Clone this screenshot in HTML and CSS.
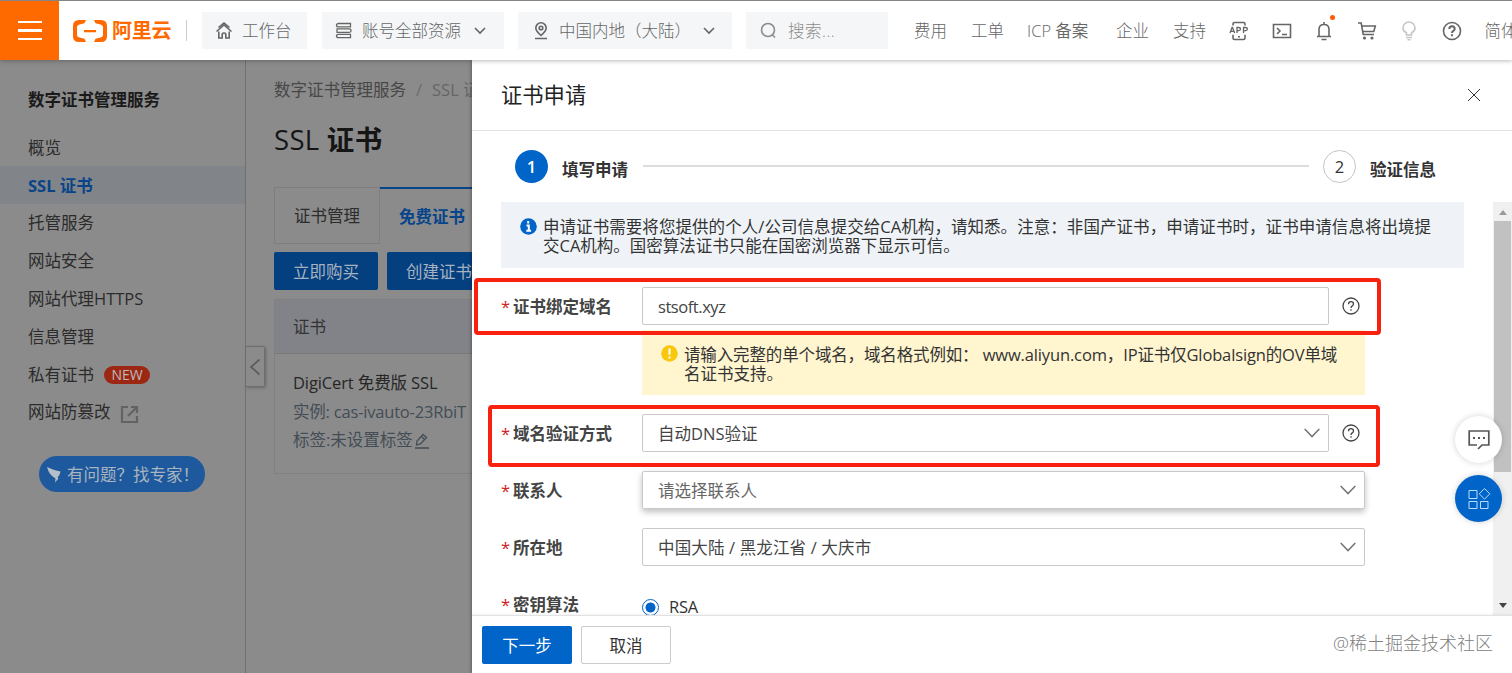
FILE: index.html
```html
<!DOCTYPE html>
<html lang="zh-CN">
<head>
<meta charset="utf-8">
<title>SSL 证书</title>
<link rel="stylesheet" href="styles.css">
</head>
<body>
<div class="app">
  <header class="top">
    <div class="menu"><i></i><i></i><i></i></div>
    <div class="logo">
      <svg width="36" height="24" viewBox="0 0 36 24"><path d="M14 1H7Q1 1 1 7v10q0 6 6 6h7l-1.500-3.200-5-1.300Q5 18 5 16V8q0-2 2.500-2.500l5-1.300ZM22 1h7q6 0 6 6v10q0 6-6 6h-7l1.500-3.200 5-1.300Q31 18 31 16V8q0-2-2.500-2.500l-5-1.300ZM12 11h12v2.200H12Z" fill="#ff6a00"/></svg>
      <b>阿里云</b>
    </div>
    <div class="divider"></div>
    <div class="pill work">
      <svg width="18" height="18" viewBox="0 0 18 18"><path d="M1.500 9.500 9 3l7.500 6.500M3.500 5.500 9 1l5.500 4.500M3.800 9.500V16h3.400v-3.500q0-1.500 1.800-1.500t1.800 1.500V16h3.400V9.500"/></svg><span>工作台</span>
    </div>
    <div class="pill account">
      <svg width="18" height="18" viewBox="0 0 18 18"><path d="M15.500 1.500h-12q-2 0-2 1.700t2 1.700h12ZM2 6.900h12q2 0 2 1.700t-2 1.700H2ZM15.500 12.300h-12q-2 0-2 1.700t2 1.700h12Z"/></svg><span>账号全部资源</span><svg class="end" width="12" height="12" viewBox="0 0 12 12"><path d="m1 3 5 5 5-5"/></svg>
    </div>
    <div class="pill region">
      <svg width="18" height="18" viewBox="0 0 18 18"><path d="M9 13.500C5 10 3.800 8.500 3.800 6a5.200 5.200 0 0 1 10.400 0c0 2.500-1.200 4-5.200 7.500ZM3 16.500h12"/><circle cx="9" cy="6" r="1.800"/></svg><span>中国内地（大陆）</span><svg class="end" width="12" height="12" viewBox="0 0 12 12"><path d="m1 3 5 5 5-5"/></svg>
    </div>
    <div class="pill search">
      <svg width="17" height="17" viewBox="0 0 17 17"><circle cx="8" cy="8" r="6.500"/><path d="m12.500 13 2.500 2.500"/></svg><span>搜索...</span>
    </div>
    <nav class="links"><a class="l1">费用</a><a class="l2">工单</a><a class="l3">ICP 备案</a><a class="l4">企业</a><a class="l5">支持</a></nav>
    <div class="icons">
      <svg width="20" height="20" viewBox="0 0 20 20"><path d="M4 4.500V3q0-1.500 1.500-1.500h9Q16 1.500 16 3v1.500M4 13.800V17q0 1.500 1.500 1.500h9Q16 18.500 16 17v-3.200M9 15.800h2"/><path class="fine" d="m1 12 2.100-5.500h.4L5.600 12M1.800 10.300h3.200M8 12V6.500h1.800q1.700 0 1.700 1.500T9.800 9.600H8M14.500 12V6.500h2q1.900 0 1.900 1.500t-1.900 1.600h-2"/></svg>
      <svg width="20" height="20" viewBox="0 0 20 20"><path d="M1.500 3.500h17v13h-17ZM5 7l3 3-3 3M10 13.500h5"/></svg>
      <span class="bell"><svg width="20" height="20" viewBox="0 0 20 20"><path d="M10 1v2M5 15V8.500q0-5 5-5t5 5V15M3 15.500h14M7.500 18.500h5"/></svg><i></i></span>
      <svg width="20" height="20" viewBox="0 0 20 20"><path d="M1 2h3.200l2 11.500H17M4.800 5h13.500l-1.500 5.500H6"/><circle cx="7.500" cy="17" r=".8"/><circle cx="15" cy="17" r=".8"/></svg>
      <svg class="pale" width="20" height="20" viewBox="0 0 20 20"><path d="M7.500 14v-2q-3.500-2-3.500-5a6 6 0 0 1 12 0q0 3-3.500 5v2ZM7 16.500h6M8.500 18.700h3"/></svg>
      <svg width="20" height="20" viewBox="0 0 20 20"><circle cx="10" cy="10" r="8.500"/><path d="M7.300 8q0-2.700 2.700-2.700T12.700 8q0 1.200-1.400 2-1.300.7-1.300 2M10 13.300v2" stroke-width="2"/></svg>
    </div>
    <span class="lang">简体</span>
  </header>

  <div class="body">
    <aside class="side">
      <h2>数字证书管理服务</h2>
      <ul>
        <li>概览</li>
        <li class="on">SSL 证书</li>
        <li>托管服务</li>
        <li>网站安全</li>
        <li>网站代理HTTPS</li>
        <li>信息管理</li>
        <li>私有证书<em>NEW</em></li>
        <li>网站防篡改<svg width="19" height="19" viewBox="0 0 19 19"><path d="M8 2H2v15h15v-6M11 2h6v6M17 2 8 11"/></svg></li>
      </ul>
      <div class="ask"><svg width="16" height="18" viewBox="0 0 16 18"><path d="M1 1q6 3 13.500 4.500Q14 9 11.500 11.500l1 1-3.500 4 .5-4Q3 9 1 1Z"/></svg>有问题？找专家！</div>
      <div class="fold"><svg width="12" height="18" viewBox="0 0 12 18"><path d="M10.500 1.500 2 9l8.500 7.500"/></svg></div>
    </aside>

    <main class="page">
      <div class="crumb">数字证书管理服务<i>/</i><span>SSL 证书</span></div>
      <h1><span>SSL</span> 证书</h1>
      <div class="tabs"><div class="tab">证书管理</div><div class="tab cur">免费证书</div></div>
      <div class="acts"><button>立即购买</button><button>创建证书</button></div>
      <div class="table">
        <div class="th">证书</div>
        <div class="td"><p class="name">DigiCert 免费版 SSL</p><p class="inst">实例: cas-ivauto-23RbiT</p><p>标签:未设置标签<svg width="16" height="16" viewBox="0 0 16 16"><path d="M1 15h14M2.500 12l.5-4 6-6.500 3.500 3L6.500 11ZM7.500 3.500l3 3"/></svg></p></div>
      </div>
    </main>

    <section class="drawer">
      <div class="dhead"><span>证书申请</span><svg width="14" height="14" viewBox="0 0 14 14"><path d="m1 1 12 12M13 1 1 13"/></svg></div>
      <div class="steps"><b class="num on">1</b><strong>填写申请</strong><hr><b class="num">2</b><strong>验证信息</strong></div>
      <div class="scroll">
        <div class="form">
          <div class="notice">
            <svg width="17" height="17" viewBox="0 0 17 17"><circle cx="8.500" cy="8.500" r="8.300" fill="#0064c8" stroke="none"/><path d="M6.500 7.500h2.300v5M6.300 12.700h4.800M8.200 3v2.400" stroke="#fff" stroke-width="2" fill="none"/></svg>
            <p><span class="n1">申请证书需要将您提供的个人/公司信息提交给CA机构，请知悉。注意：非国产证书，申请证书时，证书申请信息将出境提</span><br><span>交CA机构。国密算法证书只能在国密浏览器下显示可信。</span></p>
          </div>
          <div class="row r1"><label>证书绑定域名</label><div class="box short"><span class="dom">stsoft.xyz</span></div><svg class="q" width="18" height="18" viewBox="0 0 18 18"><circle cx="9" cy="9" r="8"/><path d="M6.500 7.200q0-2.500 2.500-2.500t2.500 2.300q0 1-1.300 1.900Q9 9.700 9 11M9 12.300v1.500"/></svg></div>
          <div class="hint">
            <svg width="17" height="17" viewBox="0 0 17 17"><circle cx="8.500" cy="8.500" r="8.300" fill="#f9c80e" stroke="none"/><path d="M8.500 3.500v6.300M8.500 11.500v2" stroke="#fff" stroke-width="2" fill="none"/></svg>
            <p><span class="w1">请输入完整的单个域名，域名格式例如： www.aliyun.com，IP证书仅Globalsign的OV单域</span><br><span>名证书支持。</span></p>
          </div>
          <div class="row r2"><label>域名验证方式</label><div class="box short">自动DNS验证<svg class="v" width="16" height="10" viewBox="0 0 16 10"><path d="m.7 1 7.300 7.500L15.300 1"/></svg></div><svg class="q" width="18" height="18" viewBox="0 0 18 18"><circle cx="9" cy="9" r="8"/><path d="M6.500 7.200q0-2.500 2.500-2.500t2.500 2.300q0 1-1.300 1.900Q9 9.700 9 11M9 12.300v1.500"/></svg></div>
          <div class="row r3"><label>联系人</label><div class="box lift">请选择联系人<svg class="v" width="16" height="10" viewBox="0 0 16 10"><path d="m.7 1 7.300 7.500L15.300 1"/></svg></div></div>
          <div class="row r4"><label>所在地</label><div class="box"><span class="place">中国大陆 / 黑龙江省 / 大庆市</span><svg class="v" width="16" height="10" viewBox="0 0 16 10"><path d="m.7 1 7.300 7.500L15.300 1"/></svg></div></div>
          <div class="row r5"><label>密钥算法</label><i class="radio"></i><span class="rsa">RSA</span></div>
        </div>
        <div class="bar"><i class="up"></i><div class="thumb"></div><i class="down"></i></div>
      </div>
      <footer><button class="next">下一步</button><button class="cancel">取消</button><span class="mark">@稀土掘金技术社区</span></footer>
    </section>
  </div>

  <div class="frame f1"></div>
  <div class="frame f2"></div>
  <div class="float chat"><svg width="22" height="22" viewBox="0 0 22 22"><path d="M9 16H1.200V2h19.600v14H14l-4 4" stroke-width="1.700"/><path d="M5 9h2M10 9h2M15 9h2" stroke-width="2"/></svg></div>
  <div class="float grid"><svg width="24" height="24" viewBox="0 0 24 24"><path d="M2 3.500h8v8H2ZM2 14.500h8v7H2ZM13.500 14.500h7.500v7h-7.500ZM17.500 1.500l5.300 5.300-5.300 5.300-5.300-5.300Z"/></svg></div>
</div>
</body>
</html>
```

FILE: styles.css
```css
* { box-sizing: border-box; }
body { margin: 0; font: 16.5px/22px "Open Sans", "Noto Sans CJK SC", sans-serif; color: #333; }
p, h1, h2, ul { margin: 0; padding: 0; }
ul { list-style: none; }
svg { fill: none; stroke: currentColor; flex: none; }
button { font: inherit; padding: 0; }
.app { position: relative; width: 1512px; height: 673px; overflow: hidden; display: flex; flex-direction: column; white-space: nowrap; }

.top { position: relative; z-index: 3; height: 60px; flex: none; display: flex; align-items: center; background: #fff; border-top: 1px solid #858585; box-shadow: 0 1px 4px rgba(0,0,0,.28); color: #666; }
.top svg { stroke-width: 1.6; }
.menu { width: 59px; height: 59px; flex: none; background: #ff6a00; display: flex; flex-direction: column; align-items: center; justify-content: center; gap: 6px; }
.menu i { width: 24px; height: 2.500px; background: #fff; }
.logo { width: 114px; flex: none; margin-left: 13px; display: flex; align-items: center; gap: 4px; color: #ff6a00; }
.logo svg { stroke: none; }
.logo b { font-size: 20px; letter-spacing: -.3px; }
.divider { width: 1px; height: 21px; background: #ccc; margin-right: 15px; flex: none; }
.pill { height: 37px; flex: none; display: flex; align-items: center; background: #f5f6f7; font-weight: 300; }
.pill span { padding-top: 1px; }
.pill .end { margin-left: auto; }
.work { width: 105px; padding-left: 13px; margin-right: 15px; }
.work span { margin-left: 9px; }
.account { width: 182px; padding: 0 18px 0 13px; margin-right: 14px; }
.account svg:first-child { stroke-width: 1.3; }
.account span { margin-left: 9px; }
.region { width: 214px; padding: 0 17px 0 14px; margin-right: 14px; }
.region span { margin-left: 9px; }
.search { width: 142px; padding-left: 14px; color: #8c8c8c; }
.search span { margin-left: 11px; letter-spacing: .5px; }
.links { display: flex; flex: none; margin-left: 26px; font-weight: 300; padding-top: 1px; }
.l1 { width: 57px; } .l2 { width: 56px; } .l3 { width: 89px; } .l4 { width: 57px; } .l5 { width: 56px; }
.l3 { font-weight: 350; }
.icons { display: flex; flex: none; gap: 22.500px; }
.icons .fine { stroke-width: 1.300; }
.icons .pale { color: #c6c6c6; }
.bell { position: relative; display: flex; }
.bell i { position: absolute; right: -1px; top: -6px; width: 5px; height: 5px; border-radius: 50%; background: #ff5a00; }
.lang { margin-left: 23px; font-weight: 300; padding-top: 1px; }

.body { flex: 1; display: flex; min-height: 0; background: #8b8b8b; }
.side { position: relative; width: 246px; flex: none; border-right: 1px solid #707070; color: #2b2b2b; }
.side h2 { margin: 29px 0 17px 28px; font-size: 16.500px; line-height: 22px; color: #1a1a1a; }
.side li { height: 37.800px; padding: 2px 0 0 28px; display: flex; align-items: center; }
.side .on { background: #818489; color: #094488; font-weight: 700; }
.side em { margin-left: 10px; width: 46px; height: 18px; border-radius: 9px; background: #9c2713; color: #bbb; font: 14px/18px "Open Sans", sans-serif; text-align: center; }
.side li svg { margin: 4px 0 0 9px; color: #636363; stroke-width: 2.200; }
.ask { margin: 26px 0 0 39px; width: 166px; height: 36px; border-radius: 18px; background: #1d599c; color: #a9b4c0; display: flex; align-items: center; padding: 2px 0 0 7px; gap: 5px; }
.ask svg { fill: #b4bfca; stroke: none; }
.fold { position: absolute; left: 246px; top: 286px; width: 19px; height: 41px; border: 1px solid #6d6d6d; border-left: 0; border-radius: 0 2px 2px 0; box-shadow: 1px 1px 3px rgba(0,0,0,.25); display: flex; align-items: center; justify-content: center; color: #5c5c5c; }
.fold svg { stroke-width: 1.700; }

.page { width: 226px; flex: none; padding: 19px 0 0 28px; overflow: hidden; }
.crumb { color: #474747; }
.crumb i { margin: 0 10px; color: #6c6c6c; font-style: normal; }
.crumb span { color: #666; }
.page h1 { margin-top: 21px; font-size: 27.500px; line-height: 36px; letter-spacing: .3px; color: #151515; }
.page h1 span { font-weight: 500; }
.tabs { display: flex; margin-top: 29px; }
.tab { width: 106px; height: 57px; flex: none; display: flex; align-items: center; justify-content: center; border: 1px solid #7e7e7e; color: #2c2c2c; padding-top: 1px; }
.tab.cur { width: 104px; border: 0; border-top: 2px solid #07448a; color: #07448a; font-weight: 700; }
.acts { display: flex; gap: 9px; margin-top: 8px; }
.acts button { width: 104px; height: 38px; flex: none; border: 0; border-radius: 2px; background: #043f80; color: #a6b2bf; padding-top: 1px; }
.table { width: 300px; margin-top: 9px; border: 1px solid #808080; }
.th { height: 54px; display: flex; align-items: center; padding-left: 18px; background: #818389; border-bottom: 1px solid #787878; color: #333; }
.td { height: 119px; padding: 15px 0 0 18px; line-height: 28.500px; color: #434d56; }
.td .name { color: #262626; letter-spacing: -.12px; }
.inst { letter-spacing: -.2px; }
.td svg { vertical-align: -3px; stroke-width: 1.300; margin-left: 1px; }

.drawer { flex: 1; min-width: 0; display: flex; flex-direction: column; background: #fff; box-shadow: -1px 0 3px rgba(0,0,0,.3); z-index: 1; }
.dhead { height: 71px; flex: none; display: flex; align-items: center; justify-content: space-between; padding: 0 31px 0 29px; border-bottom: 1px solid #e3e3e3; font-size: 21.300px; color: #222; }
.dhead svg { color: #333; }
.steps { height: 71px; flex: none; display: flex; align-items: center; padding-left: 43px; }
.num { width: 33px; height: 33px; flex: none; border: 1px solid #c4c4c4; border-radius: 50%; font-weight: 400; line-height: 32px; text-align: center; }
.num.on { border: 0; background: #0064c8; color: #fff; font-weight: 600; line-height: 34px; }
.steps strong { margin-left: 14px; padding-top: 7px; color: #333; }
.steps hr { width: 666px; height: 2px; margin: 0 14px 1px 15px; border: 0; background: #ddd; flex: none; }
.scroll { flex: 1; min-height: 0; display: flex; overflow: hidden; }
.form { flex: 1; padding-left: 29px; }
.notice { width: 963px; height: 66px; background: #eff3f8; display: flex; padding: 16px 0 0 19px; gap: 7px; line-height: 19px; }
.notice p, .hint p { margin-left: -1px; }
.notice p { margin-top: -1px; }
.n1 { letter-spacing: .06px; }
.w1 { letter-spacing: -.14px; }
.row { display: flex; align-items: center; width: 864px; height: 38px; }
.row label { width: 141px; flex: none; font-weight: 700; color: #444; padding-top: 2px; }
.row label::before { content: "*"; display: inline-block; width: 12px; color: #d02020; font-weight: 400; }
.box { width: 723px; height: 38px; display: flex; align-items: center; justify-content: space-between; padding: 2px 8px 0 15px; border: 1px solid #c9c9c9; border-radius: 2px; color: #444; }
.box.short { width: 687px; }
.box .v { color: #777; stroke-width: 1.600; margin-bottom: 2px; }
.dom { letter-spacing: -.45px; }
.place { letter-spacing: .15px; }
.q { margin-left: 13px; color: #444; stroke-width: 1.300; }
.r1 { margin-top: 19px; }
.hint { width: 723px; height: 65px; margin: 5px 0 19px 141px; background: #fff5cf; display: flex; padding: 15px 0 0 19px; gap: 7px; line-height: 19px; }
.r3, .r4, .r5 { margin-top: 19px; }
.lift { box-shadow: 0 3px 6px rgba(0,0,0,.25); color: #666; }
.radio { width: 17px; height: 17px; margin-top: 6px; border: 1.500px solid #0064c8; border-radius: 50%; background: radial-gradient(circle, #0064c8 0 4.700px, #fff 5.300px); }
.rsa { margin: 6px 0 0 10px; letter-spacing: -.3px; }
.bar { width: 19px; flex: none; background: #f0f0f0; display: flex; flex-direction: column; align-items: center; padding: 8px 0 7px; }
.bar i { width: 0; height: 0; border: 4.500px solid transparent; }
.bar .up { border-top: 0; border-bottom: 5px solid #999; }
.bar .down { border-bottom: 0; border-top: 5px solid #444; margin-top: auto; }
.thumb { width: 17px; height: 251px; background: #c1c1c1; margin-top: 6px; }
footer { height: 58px; flex: none; display: flex; align-items: center; gap: 9px; padding: 0 19px 0 10px; border-top: 1px solid #e2e2e2; box-shadow: 0 -1px 2px rgba(0,0,0,.05); }
footer button { width: 90px; height: 38px; border-radius: 2px; border: 1px solid #ccc; background: #fff; color: #333; padding-top: 2px; }
footer .next { border: 0; background: #0064c8; color: #fff; }
.mark { margin-left: auto; font-size: 18px; font-weight: 300; color: #808080; position: relative; top: -2px; }

.frame { position: absolute; z-index: 2; border: 4px solid #f8200f; border-radius: 4px; }
.f1 { left: 474px; top: 278px; width: 907px; height: 57px; }
.f2 { left: 488px; top: 405px; width: 892px; height: 62px; }
.float { position: absolute; z-index: 2; left: 1455px; width: 47px; height: 47px; border-radius: 50%; display: flex; align-items: center; justify-content: center; box-shadow: 0 0 6px rgba(0,0,0,.18); }
.chat { top: 416px; background: #fff; color: #555; }
.grid { top: 475px; background: #0064c8; color: #b9dcff; }
```
